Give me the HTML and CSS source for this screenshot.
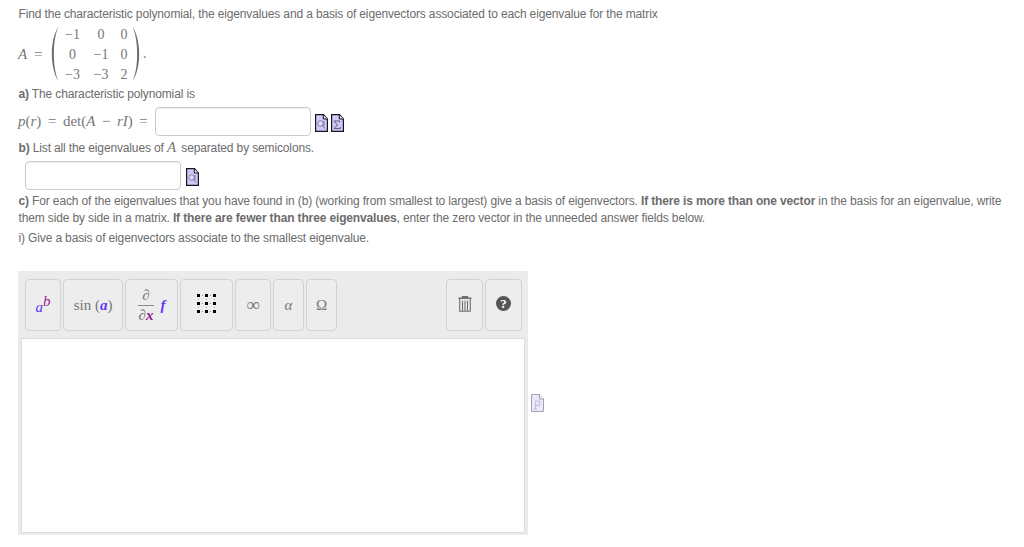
FILE: index.html
```
<!DOCTYPE html>
<html lang="en">
<head>
    <meta charset="UTF-8">
    <title>Eigenvalues and eigenvectors</title>
    <meta name="viewport" content="width=device-width, initial-scale=1">
    <link rel="stylesheet" href="styles.css">
</head>
<body>
    <svg width="0" height="0" class="symbols">
        <symbol id="page" viewBox="0 0 13 18">
            <path d="M.6.6H8.5L12.4 5v12.4H.6z" fill="#cfc8fb" stroke="#16161c" stroke-width="1.2"/>
            <path d="M8.3 1v4h4" fill="#e8e5ff" stroke="#16161c"/>
        </symbol>
        <symbol id="preview" viewBox="0 0 13 18">
            <use href="#page"/>
            <circle cx="5.5" cy="9.5" r="2.8" fill="#dedaff" stroke="#77778c" stroke-width=".9"/>
            <path d="M7.5 11.5l2.5 3M8.9 7v5" fill="none" stroke="#66667a" stroke-width=".9"/>
        </symbol>
        <symbol id="sigma" viewBox="0 0 13 18">
            <use href="#page"/>
            <path d="M8.6 8.4V7H3l3.4 4L3 14.6h6.2V13" fill="none" stroke="#5c5c74"/>
        </symbol>
    </svg>
    <div class="question">
        <p class="question__text">Find the characteristic polynomial, the eigenvalues and a basis of eigenvectors associated to each eigenvalue for the matrix</p>
        <div class="matrix">
            <span class="matrix__name math"><i>A</i> =</span>
            <svg class="matrix__bracket" viewBox="0 0 8 56"><path d="M7.5.5C-1.4 14-1.4 42 7.5 55.5 1.3 42 1.3 14 7.5.5z"/></svg>
            <div class="matrix__cells math">
                <span>−1</span><span>0</span><span>0</span>
                <span>0</span><span>−1</span><span>0</span>
                <span>−3</span><span>−3</span><span>2</span>
            </div>
            <svg class="matrix__bracket" viewBox="0 0 8 56"><path d="M.5.5C9.4 14 9.4 42 .5 55.5 6.7 42 6.7 14 .5.5z"/></svg>
            <span class="matrix__dot math">.</span>
        </div>
        <p class="question__text"><b>a)</b> The characteristic polynomial is</p>
        <div class="answer">
            <span class="answer__label math"><i>p</i>(<i>r</i>) = det(<i>A</i> − <i>rI</i>) =</span>
            <input type="text" class="answer__input">
            <svg class="answer__icon"><use href="#preview"/></svg>
            <svg class="answer__icon"><use href="#sigma"/></svg>
        </div>
        <p class="question__text question__text--b"><b>b)</b> List all the eigenvalues of <i class="math">A</i> separated by semicolons.</p>
        <div class="answer answer--indent">
            <input type="text" class="answer__input">
            <svg class="answer__icon"><use href="#preview"/></svg>
        </div>
        <p class="question__text question__text--c"><b>c)</b> For each of the eigenvalues that you have found in (b) (working from smallest to largest) give a basis of eigenvectors. <b>If there is more than one vector</b> in the basis for an eigenvalue, write<br>them side by side in a matrix. <b>If there are fewer than three eigenvalues</b>, enter the zero vector in the unneeded answer fields below.</p>
        <p class="question__text">i) Give a basis of eigenvectors associate to the smallest eigenvalue.</p>
        <div class="editor-row">
            <div class="editor">
                <div class="editor__toolbar math">
                    <button class="editor__button editor__button--power"><i class="blue">a</i><i class="purple power">b</i></button>
                    <button class="editor__button editor__button--sin"><span>sin (<b class="blue"><i>a</i></b>)</span></button>
                    <button class="editor__button editor__button--wide">
                        <span class="fraction"><i>∂</i><i class="fraction__bottom">∂<b class="purple">x</b></i></span>
                        <b class="blue"><i>f</i></b>
                    </button>
                    <button class="editor__button editor__button--wide editor__button--matrix">
                        <svg width="19" height="19" viewBox="0 0 19 19">
                            <path d="M5 1h1v1H5zM13 1h1v1h-1zM5 9h1v1H5zM13 9h1v1h-1zM5 17h1v1H5zM13 17h1v1h-1zM1 5h1v1H1zM9 5h1v1H9zM17 5h1v1h-1zM1 13h1v1H1zM9 13h1v1H9zM17 13h1v1h-1z" fill="#999"/>
                            <path d="M0 0h3v3H0zM8 0h3v3H8zM16 0h3v3h-3zM0 8h3v3H0zM8 8h3v3H8zM16 8h3v3h-3zM0 16h3v3H0zM8 16h3v3H8zM16 16h3v3h-3z"/>
                        </svg>
                    </button>
                    <button class="editor__button editor__button--infinity">∞</button>
                    <button class="editor__button"><i>α</i></button>
                    <button class="editor__button">Ω</button>
                    <button class="editor__button editor__button--tool editor__button--trash">
                        <svg width="14" height="16" viewBox="0 0 14 16" fill="none" stroke="#707070">
                            <path d="M.5 2.2h13M4.5 2V.7h5V2" stroke-width="1.4"/>
                            <path d="M1.7 3v12.3h10.6V3M4.5 4.5V15M7 4.5V15M9.5 4.5V15" stroke-width="1.1"/>
                        </svg>
                    </button>
                    <button class="editor__button editor__button--tool"><span class="help">?</span></button>
                </div>
                <div class="editor__canvas"></div>
            </div>
            <svg class="editor-row__icon" viewBox="0 0 13 18">
                <path d="M.5.5h8L12.5 5v12.5H.5z" fill="#e9e7fb" stroke="#a3a3ab"/>
                <path d="M8.5.5V5h4" fill="#f6f5ff" stroke="#a3a3ab"/>
                <path d="M4.5 15V7h4v4.5h-4M3 15h3" fill="none" stroke="#c0bdd4"/>
            </svg>
        </div>
    </div>
</body>
</html>
```
FILE: styles.css
```
* {
    margin: 0;
    padding: 0;
    box-sizing: border-box;
}
body {
    font: 12px/18px "Liberation Sans", Arial, sans-serif;
    letter-spacing: -0.14px;
    background: #fff;
    color: #6c6c6c;
}
.symbols {
    display: block;
}
.question {
    padding: 5px 0 0 18px;
}
.question__text {
    height: 18px;
    padding-left: 0.5px;
    white-space: nowrap;
}
.question__text--b .math {
    line-height: 1;
    font-size: 15px;
    margin-right: 2px;
}
.question__text--c {
    height: 36px;
    line-height: 16.5px;
}
.math {
    font-family: "Liberation Serif", "Times New Roman", serif;
    letter-spacing: 0;
    color: #777;
}
.matrix {
    display: flex;
    align-items: center;
    height: 62px;
    font-size: 14px;
}
.matrix__name {
    width: 33px;
    font-size: 15px;
    word-spacing: 3px;
    white-space: nowrap;
}
.matrix__bracket {
    width: 8px;
    height: 56px;
    fill: #6c6c6c;
}
.matrix__cells {
    display: grid;
    grid-template-columns: 25px 32px 14px;
    line-height: 20px;
    text-align: center;
    padding: 2px 1px 0 0;
    margin-left: 1px;
}
.matrix__dot {
    margin-left: 3px;
}
.answer {
    display: flex;
    align-items: center;
    height: 36px;
}
.answer__label {
    width: 137px;
    font-size: 15px;
    word-spacing: 2.8px;
    white-space: nowrap;
}
.answer--indent {
    padding-left: 7px;
}
.answer__input {
    width: 156px;
    height: 29px;
    margin-right: 4px;
    border: 1px solid #ccc;
    border-radius: 4px;
    box-shadow: inset 0 1px 1px rgba(0, 0, 0, 0.075);
}
.answer--indent .answer__input {
    margin-right: 5px;
}
.answer__icon {
    width: 13px;
    height: 18px;
    margin: 4px 3px 0 0;
}
.editor-row {
    display: flex;
    align-items: center;
    margin-top: 24px;
}
.editor-row__icon {
    width: 13px;
    height: 18px;
    margin-left: 3px;
}
.editor {
    width: 510px;
    height: 264px;
    background: #ebebeb;
    padding: 8px 3px 2px;
}
.editor__toolbar {
    display: flex;
    gap: 2px;
    height: 52px;
    padding: 0 3px 0 4px;
}
.editor__button {
    display: flex;
    align-items: center;
    justify-content: center;
    width: 31px;
    height: 52px;
    border: 1px solid #d2d2d2;
    border-radius: 4px;
    background: #ededed;
    font: inherit;
    font-size: 15px;
    color: #777;
}
.editor__button--power {
    width: 36px;
    padding-top: 3px;
}
.editor__button--sin {
    width: 60px;
}
.editor__button--wide {
    width: 53px;
    gap: 6px;
}
.editor__button--matrix {
    padding-bottom: 3px;
}
.editor__button--infinity {
    width: 36px;
    font-size: 19px;
}
.editor__button--tool {
    width: 37px;
    padding-bottom: 3px;
}
.editor__button--trash {
    margin-left: auto;
}
.blue {
    color: #6236f5;
}
.purple {
    color: #991a93;
}
.power {
    margin-bottom: 12px;
}
.fraction {
    display: flex;
    flex-direction: column;
    align-items: center;
    line-height: 19px;
}
.fraction__bottom {
    border-top: 1px solid #888;
    padding: 0 1px;
}
.help {
    width: 15px;
    height: 15px;
    border-radius: 50%;
    background: #555;
    color: #fff;
    font: bold 13px/15px "Liberation Serif", "Times New Roman", serif;
    text-align: center;
}
.editor__canvas {
    height: 195px;
    margin-top: 7px;
    background: #fff;
    border: 1px solid #ddd;
}
```
